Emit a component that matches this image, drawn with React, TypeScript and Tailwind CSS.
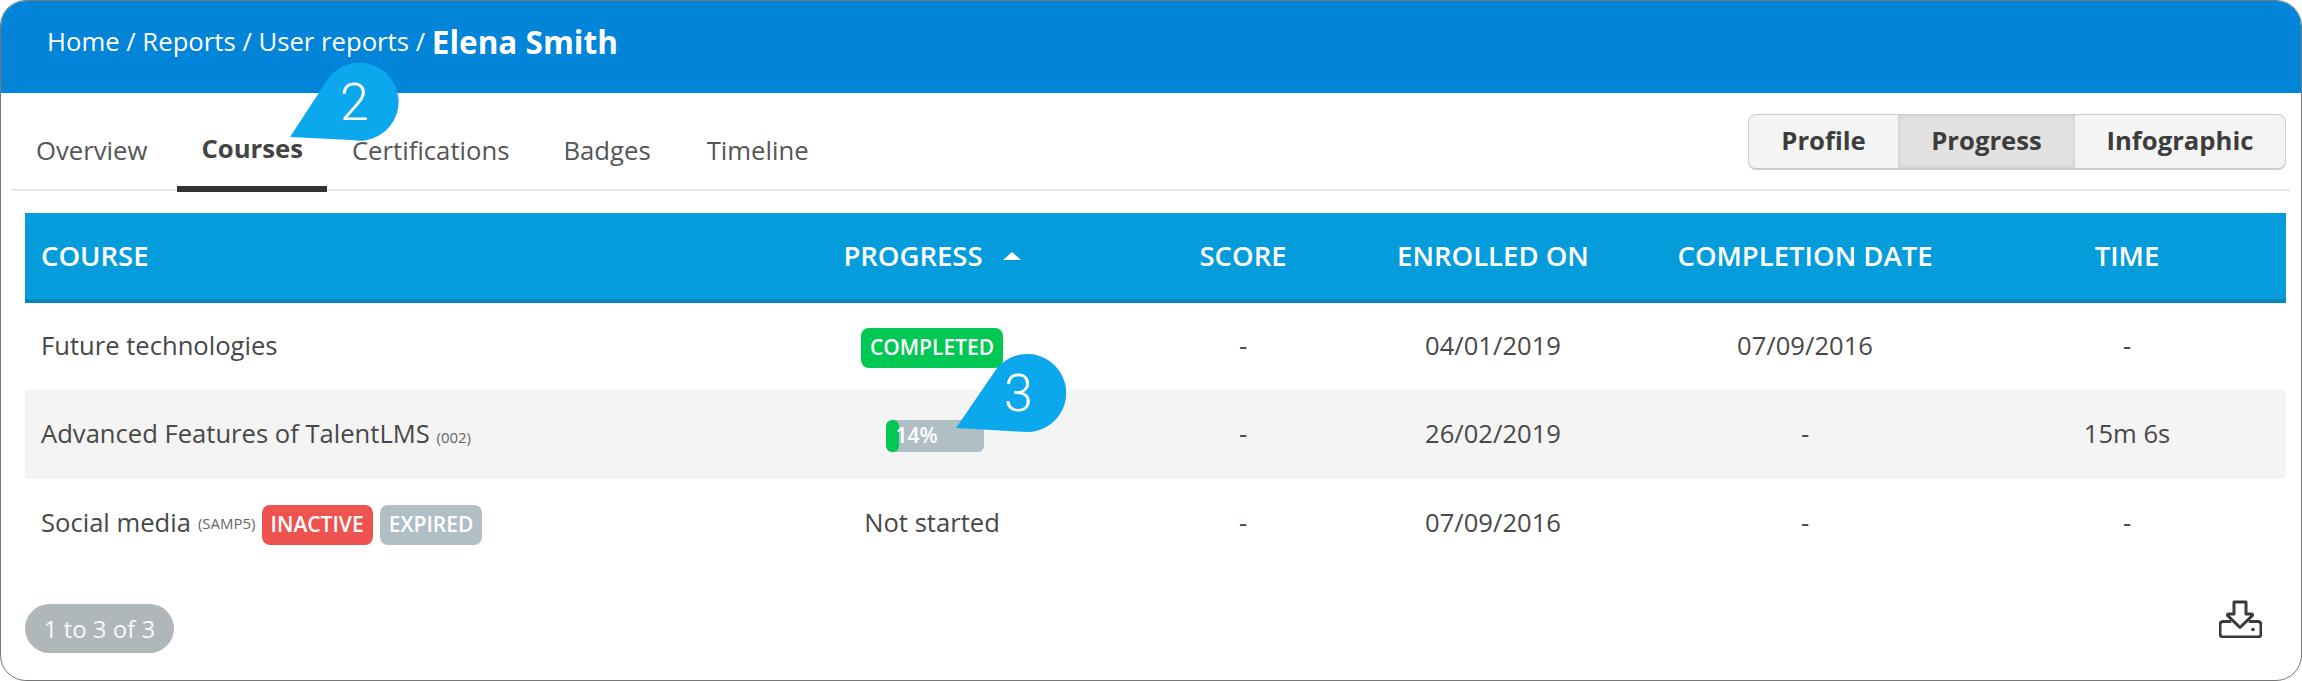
const font = { fontFamily: '"Open Sans", sans-serif' };

function Callout({ cls, d, n, nCls }: { cls: string; d: string; n: string; nCls: string }) {
  return (
    <div className={`absolute ${cls}`}>
      <svg width="120" height="90" viewBox="0 0 120 90" className="block">
        <path d={d} fill="#0ba8ee" />
      </svg>
      <span className={`absolute text-white text-[52px] leading-none font-light font-['Roboto',sans-serif] ${nCls}`}>{n}</span>
    </div>
  );
}

function DownloadIcon() {
  return (
    <svg width="43" height="38" viewBox="0 0 43 38" fill="none" stroke="#3a3a3a" strokeWidth="3" strokeLinejoin="round" strokeLinecap="round">
      <path d="M15 2h12v12h5.5c1 0 1.4 1 .8 1.7L21 27.5 8.7 15.7c-.6-.7-.2-1.7.8-1.7H15z" />
      <path d="M11 21.5H4c-1.7 0-3 1.3-3 3V34c0 1.7 1.3 3 3 3h35c1.7 0 3-1.3 3-3v-9.5c0-1.7-1.3-3-3-3h-8" />
      <circle cx="34" cy="29.5" r="1.8" fill="#3a3a3a" stroke="none" />
    </svg>
  );
}

function Badge({ bg, children }: { bg: string; children: string }) {
  return (
    <span className={`inline-flex items-center justify-center h-10 mt-[3px] px-[9px] rounded-lg text-white text-[21px] font-semibold ${bg}`}>
      {children}
    </span>
  );
}

const gridCols = "grid grid-cols-[698px_418px_204px_296px_328px_316px] items-center";

function Row({ cls, first, second, rest }: { cls: string; first: React.ReactNode; second: React.ReactNode; rest: string[] }) {
  return (
    <div className={`${gridCols} ${cls} text-[25.6px] text-[#484848]`}>
      <div className="pl-4 flex items-center">{first}</div>
      <div className="flex justify-center">{second}</div>
      {rest.map((r, i) => (
        <div key={i} className="text-center">{r}</div>
      ))}
    </div>
  );
}

export default function App() {
  return (
    <div style={font} className="relative w-[2302px] h-[681px] bg-white overflow-hidden">
      <div className="w-full h-full border border-[#777] rounded-[26px] overflow-hidden flex flex-col">
        <div className="h-[92px] shrink-0 bg-[#0284d8] flex items-center pl-[46px] pb-[10px] text-white text-[25.7px]">
          <span>Home / Reports / User reports /&nbsp;</span>
          <span className="font-bold text-[31.5px]">Elena Smith</span>
        </div>

        <div className="ml-[10px] mr-[11px] h-[98px] shrink-0 flex justify-between border-b-2 border-[#e6e6e6]">
          <div className="flex pl-[1px] text-[25.7px] text-[#555]">
            <div className="px-6 h-[99px] pt-[39px]">Overview</div>
            <div className="ml-[6px] px-6 h-[99px] pt-[37px] border-b-[6px] border-[#333] font-bold text-[#444]">Courses</div>
            <div className="ml-[1px] px-6 h-[99px] pt-[39px]">Certifications</div>
            <div className="ml-[6px] px-6 h-[99px] pt-[39px]">Badges</div>
            <div className="ml-[8px] px-6 h-[99px] pt-[39px]">Timeline</div>
          </div>
          <div className="mt-[21px] mr-[4px] h-[56px] flex rounded-lg border border-[#ccc] border-b-2 bg-[#f4f4f4] text-[25.7px] font-bold text-[#3d3d3d]">
            <div className="w-[149px] flex items-center justify-center">Profile</div>
            <div className="w-[177px] flex items-center justify-center bg-[#e2e2e2] shadow-[inset_0_0_5px_rgba(0,0,0,0.12)]">Progress</div>
            <div className="w-[210px] flex items-center justify-center">Infographic</div>
          </div>
        </div>

        <div className="ml-[24px] mr-[15px] mt-[22px]">
          <div className={`${gridCols} h-[90px] bg-[#059cdb] border-b-4 border-[#0288c0] text-white text-[27.5px] font-semibold`}>
            <div className="pl-4">COURSE</div>
            <div className="flex items-center justify-center gap-5">
              <span>PROGRESS</span>
              <span className="w-0 h-0 border-x-[9px] border-x-transparent border-b-[8px] border-b-white" />
            </div>
            <div className="text-center">SCORE</div>
            <div className="text-center">ENROLLED ON</div>
            <div className="text-center">COMPLETION DATE</div>
            <div className="text-center">TIME</div>
          </div>

          <Row
            cls="h-[87px]"
            first={<span>Future technologies</span>}
            second={<Badge bg="bg-[#00c853]">COMPLETED</Badge>}
            rest={["-", "04/01/2019", "07/09/2016", "-"]}
          />
          <Row
            cls="h-[89px] bg-[#f4f4f4]"
            first={
              <span>
                Advanced Features of TalentLMS <span className="text-[15px] text-[#666]">(002)</span>
              </span>
            }
            second={
              <div className="w-[98px] h-8 mt-[3px] ml-[5px] rounded-md bg-[#b0bec5] flex items-center overflow-hidden">
                <div className="w-[13px] h-full rounded-md bg-[#00c853] shrink-0" />
                <span className="-ml-[3px] text-white text-[21px] font-semibold">14%</span>
              </div>
            }
            rest={["-", "26/02/2019", "-", "15m 6s"]}
          />
          <Row
            cls="h-[88px]"
            first={
              <>
                <span>Social media</span>
                <span className="ml-[7px] mr-[6px] text-[15px] text-[#666]">(SAMP5)</span>
                <Badge bg="bg-[#ef5350]">INACTIVE</Badge>
                <span className="w-[7px]" />
                <Badge bg="bg-[#b0bec5]">EXPIRED</Badge>
              </>
            }
            second={<span>Not started</span>}
            rest={["-", "07/09/2016", "-", "-"]}
          />

          <div className="mt-[37px] flex items-start justify-between pr-[24px]">
            <div className="w-[149px] h-[49px] rounded-full bg-[#b0b7ba] text-white/90 text-[24px] flex items-center justify-center">
              1 to 3 of 3
            </div>
            <div className="-mt-[4px]">
              <DownloadIcon />
            </div>
          </div>
        </div>
      </div>

      <Callout
        cls="left-[280px] top-[55px]"
        d="M10 82 L46 27 A39 39 0 1 1 72 85 Z"
        n="2"
        nCls="left-[60px] top-[22px]"
      />
      <Callout
        cls="left-[946px] top-[345px]"
        d="M10 83 L49 26 A39 39 0 1 1 81 87 Z"
        n="3"
        nCls="left-[58px] top-[23px]"
      />
    </div>
  );
}
